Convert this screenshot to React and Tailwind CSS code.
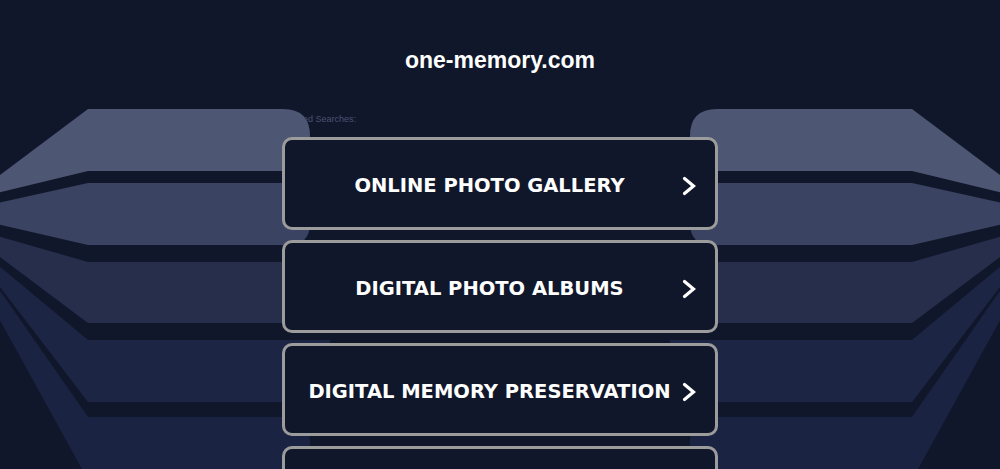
import React from "react";

function Bands() {
  const shapes = (
    <>
      <path d="M -20 190 L 88 109 L 283 109 Q 310 109 310 136 L 310 171 L 88 171 L -20 197 Z" fill="#4d5672" />
      <path d="M -20 207 L 88 183 L 310 183 L 310 223 Q 310 245 288 245 L 88 245 L -20 220 Z" fill="#3a4361" />
      <path d="M -20 231 L 88 262 L 330 262 L 330 323 L 88 323 L -20 242 Z" fill="#262e4b" />
      <path d="M -20 250 L 88 340 L 330 340 L 330 402 L 88 402 L -20 261 Z" fill="#1d2545" />
      <path d="M -20 262 L 88 417 L 285 417 Q 310 417 310 442 L 310 480 L 88 480 L 82 469 L -20 284 Z" fill="#1b2343" />
    </>
  );
  return (
    <svg
      className="absolute left-0 top-0"
      width="1000"
      height="469"
      viewBox="0 0 1000 469"
    >
      {shapes}
      <g transform="translate(1000,0) scale(-1,1)">{shapes}</g>
    </svg>
  );
}

function Chevron() {
  return (
    <svg width="14" height="20" viewBox="0 0 14 20" className="shrink-0">
      <polyline
        points="2.5,2.5 11.5,10 2.5,17.5"
        fill="none"
        stroke="#ffffff"
        strokeWidth="3.2"
        strokeLinecap="round"
        strokeLinejoin="miter"
      />
    </svg>
  );
}

const items = [
  "ONLINE PHOTO GALLERY",
  "DIGITAL PHOTO ALBUMS",
  "DIGITAL MEMORY PRESERVATION",
  "PHOTO STORAGE SOLUTIONS",
];

export default function App() {
  return (
    <div className="relative w-[1000px] h-[469px] overflow-hidden bg-[#11172b]">
      <Bands />
      <div className="flex flex-col items-center">
        <h1
          className="relative z-10 mt-[49px] text-[23px] leading-[23px] font-bold text-white"
          style={{ fontFamily: '"Liberation Sans", Arial, sans-serif' }}
        >
          one-memory.com
        </h1>
        <div className="w-[436px] mt-[41px]">
          <div
            className="text-[9px] leading-[12px] text-[#4a5272]"
            style={{ fontFamily: '"Liberation Sans", Arial, sans-serif' }}
          >
            Related Searches:
          </div>
        </div>
        <div className="relative z-10 w-[436px] mt-[12px] flex flex-col gap-[10px]">
          {items.map((t) => (
            <div
              key={t}
              className="h-[93px] shrink-0 rounded-[10px] border-[3px] border-[#9c9c9c] bg-[#11172b] flex items-center pt-[4px] pl-[22px] pr-[19px] gap-[10px]"
            >
              <span
                className="flex-1 text-center text-white font-bold text-[19.5px] leading-none whitespace-nowrap"
                style={{ fontFamily: '"DejaVu Sans", Verdana, sans-serif' }}
              >
                {t}
              </span>
              <Chevron />
            </div>
          ))}
        </div>
      </div>
    </div>
  );
}
